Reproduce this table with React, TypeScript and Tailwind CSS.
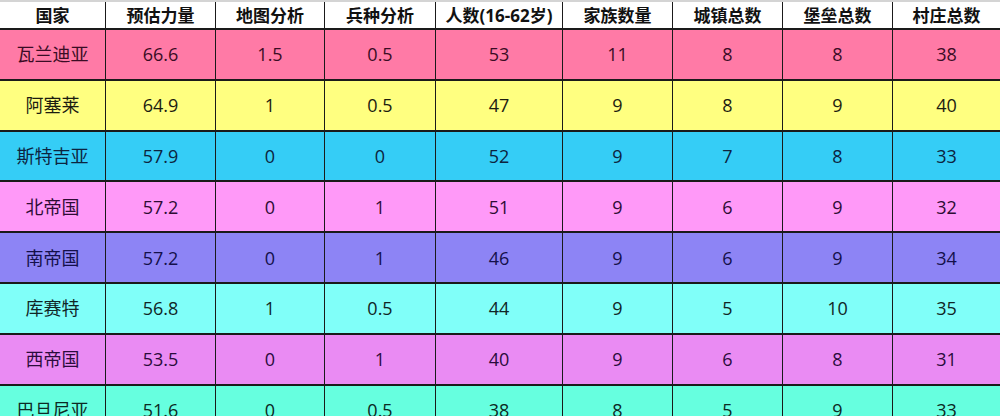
import React from "react";

const widths = ["w-[106px]", "w-[110px]", "w-[109px]", "w-[111px]", "w-[127px]", "w-[110px]", "w-[110px]", "w-[110px]", "w-[107px]"];
const headers = ["国家", "预估力量", "地图分析", "兵种分析", "人数(16-62岁)", "家族数量", "城镇总数", "堡垒总数", "村庄总数"];

type Row = { bg: string; fg: string; cells: string[] };

const rows: Row[] = [
  { bg: "bg-[#ff7aa6]", fg: "text-[#3a0c24]", cells: ["瓦兰迪亚", "66.6", "1.5", "0.5", "53", "11", "8", "8", "38"] },
  { bg: "bg-[#ffff80]", fg: "text-[#1c1c10]", cells: ["阿塞莱", "64.9", "1", "0.5", "47", "9", "8", "9", "40"] },
  { bg: "bg-[#35cdf6]", fg: "text-[#0c2440]", cells: ["斯特吉亚", "57.9", "0", "0", "52", "9", "7", "8", "33"] },
  { bg: "bg-[#ff99f8]", fg: "text-[#2e0c34]", cells: ["北帝国", "57.2", "0", "1", "51", "9", "6", "9", "32"] },
  { bg: "bg-[#8d84f5]", fg: "text-[#14104a]", cells: ["南帝国", "57.2", "0", "1", "46", "9", "6", "9", "34"] },
  { bg: "bg-[#80fff9]", fg: "text-[#102626]", cells: ["库赛特", "56.8", "1", "0.5", "44", "9", "5", "10", "35"] },
  { bg: "bg-[#ea8bf3]", fg: "text-[#2a0c3c]", cells: ["西帝国", "53.5", "0", "1", "40", "9", "6", "8", "31"] },
  { bg: "bg-[#66ffdf]", fg: "text-[#0c2a24]", cells: ["巴旦尼亚", "51.6", "0", "0.5", "38", "8", "5", "9", "33"] },
];

export default function App() {
  return (
    <div className="w-[1000px] h-[416px] overflow-hidden bg-white font-['Open_Sans','Noto_Sans_CJK_SC',sans-serif]">
      <div className="flex h-[30px] border-t-2 border-t-[#d4d4d4] border-b-2 border-b-[#1a1a1a] bg-white">
        {headers.map((h, i) => (
          <div
            key={i}
            className={`flex items-center justify-center text-[17px] font-bold text-[#111] leading-none ${widths[i]} ${i < 8 ? "border-r-[1.5px] border-r-[#1a1a1a]" : ""}`}
          >
            {h}
          </div>
        ))}
      </div>
      {rows.map((r, ri) => (
        <div key={ri} className={`flex h-[50.8px] border-b-2 border-b-[#1a1a1a] ${r.bg}`}>
          {r.cells.map((c, i) => (
            <div
              key={i}
              className={`flex items-center justify-center text-[18px] leading-none ${r.fg} ${widths[i]} ${i < 8 ? "border-r-[1.5px] border-r-[#1a1a1a]" : ""}`}
            >
              {c}
            </div>
          ))}
        </div>
      ))}
    </div>
  );
}
